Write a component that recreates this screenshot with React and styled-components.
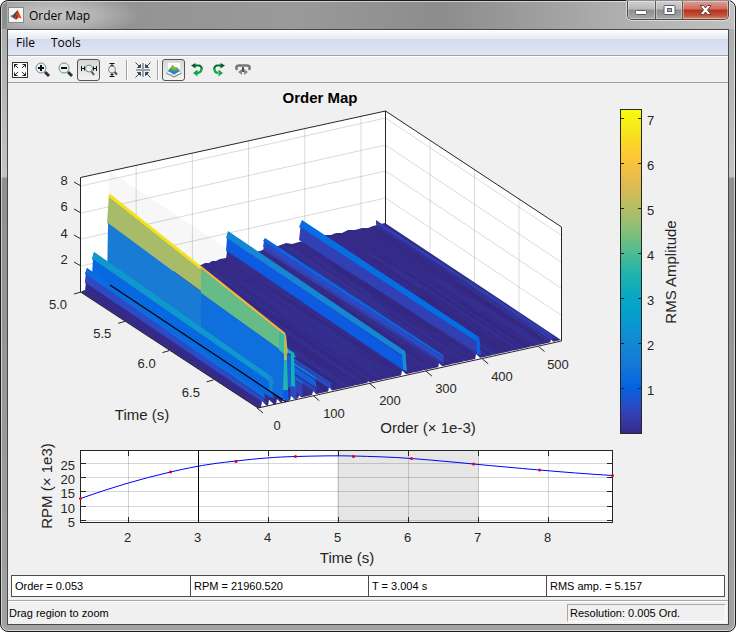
import React, { useState } from 'react';
import styled, { createGlobalStyle } from 'styled-components';

const GlobalStyle = createGlobalStyle`
  * {
    box-sizing: border-box;
  }

  body {
    margin: 0;
    background: #fff;
    color: #000;
    font-family: 'Liberation Sans', Arial, sans-serif;
    font-size: 11px;
  }
`;

const Window = styled.div`
  display: flex;
  flex-direction: column;
  min-height: 100vh;
  padding: 0 6px 6px;
  border: 1px solid #1c1c1c;
  border-radius: 8px;
  box-shadow: inset 0 0 0 1px rgba(255, 255, 255, .55);
  background:
    linear-gradient(90deg, #8e8e8e, #9a9a9a 40%, #8c8c8c 60%, #b4b4b4 88%, #c0c0c0) top / 100% 28px no-repeat,
    linear-gradient(#a8a8a8, #c4c4c4 176px, #8f8f8f 177px, #a2a2a2);
`;

const TitleBar = styled.header`
  display: flex;
  align-items: center;
  gap: 5px;
  height: 28px;
  padding-left: 1px;
  background: radial-gradient(ellipse 90px 24px at 44px 14px, rgba(255, 255, 255, .5), rgba(255, 255, 255, .3) 50%, rgba(255, 255, 255, 0));

  & > svg {
    flex: none;
  }
`;

const Title = styled.h1`
  flex: 1;
  margin: 0;
  font-family: 'Open Sans', sans-serif;
  font-size: 12px;
  font-weight: 400;
`;

const CaptionButtons = styled.div`
  display: flex;
  align-self: flex-start;
  height: 19px;
  border: 1px solid #4a4a4a;
  border-top: 0;
  border-radius: 0 0 5px 5px;
  box-shadow: 0 0 0 1px rgba(255, 255, 255, .5);
  overflow: hidden;
`;

const CaptionButton = styled.button`
  display: grid;
  place-items: center;
  width: ${props => props.$close ? '46px' : '27px'};
  padding: 0;
  border: 0;
  border-left: ${props => props.$first ? '0' : '1px solid #5a5a5a'};
  background: ${props => props.$close
    ? 'linear-gradient(#dba197, #cf6a59 45%, #b3311c 50%, #c4503a 80%, #d98a70)'
    : 'linear-gradient(#d0d0d0, #b9b9b9 45%, #8d8d8d 50%, #a9a9a9)'};
  box-shadow: inset 0 0 0 1px rgba(255, 255, 255, .35);
`;

const Client = styled.main`
  display: flex;
  flex: 1;
  flex-direction: column;
  border: 1px solid #484848;
  background: #f0f0f0;
`;

const MenuBar = styled.nav`
  display: flex;
  height: 26px;
  border-bottom: 1px solid #a0a0a0;
  background: linear-gradient(#fff, #e5eaf5 34%, #d4dbed 36%, #e1e6f6);
`;

const MenuItem = styled.button`
  padding: 0 8px;
  border: 0;
  background: none;
  font-family: 'Open Sans', sans-serif;
  font-size: 12px;
  color: #000;
`;

const Toolbar = styled.div`
  display: flex;
  align-items: center;
  height: 27px;
  border-top: 1px solid #fff;
  border-bottom: 1px solid #a0a0a0;
`;

const ToolButton = styled.button`
  display: grid;
  place-items: center;
  width: 23px;
  height: 22px;
  padding: 0;
  border: 1px solid ${props => props.$pressed ? '#555' : 'transparent'};
  border-radius: 3px;
  background: ${props => props.$pressed ? 'linear-gradient(#d6d6d6, #f2f2f2)' : 'none'};
`;

const Separator = styled.span`
  width: 2px;
  height: 20px;
  margin: 0 3px;
  border-left: 1px solid #a0a0a0;
  border-right: 1px solid #fff;
`;

const Figure = styled.section`
  flex: 1;
`;

const PlotRow = styled.div`
  display: grid;
  grid-template-columns: ${props => props.$columns || '1fr'};
`;

const Chart = styled.svg`
  display: block;
  width: 100%;
  height: auto;

  text {
    fill: #262626;
    font-size: 13px;
  }

  text.label {
    font-size: 15px;
  }

  text.title {
    font-size: 15px;
    font-weight: 700;
    fill: #000;
  }
`;

const Readouts = styled.div`
  display: grid;
  grid-template-columns: repeat(4, 1fr);
  margin: 3px;
  border: 1px solid #4c4c4c;
  background: #fff;
`;

const Readout = styled.output`
  height: 20px;
  padding-left: 3px;
  line-height: 21px;

  & + & {
    border-left: 1px solid #4c4c4c;
  }
`;

const StatusBar = styled.footer`
  display: flex;
  justify-content: space-between;
  align-items: center;
  height: 24px;
  padding: 0 2px 0 1px;
  border-top: 1px solid #a8a8a8;
  box-shadow: inset 0 1px #fff;
`;

const StatusPanel = styled.span`
  width: 159px;
  height: 18px;
  padding-left: 2px;
  border: 1px solid;
  border-color: #a8a8a8 #fff #fff #a8a8a8;
  line-height: 16px;
`;

const MatlabIcon = () => (
  <svg width="16" height="16" viewBox="0 0 16 16" aria-hidden="true">
    <rect x=".5" y=".5" width="15" height="15" fill="#f4f4f4" stroke="#8a8a8a" />
    <path d="M2 9 L5.500 7.500 L7 9 L5 11 Z" fill="#3f7fc0" />
    <path d="M5.500 7.500 L9.500 3 L8.500 8.500 L6.500 11.500 L5 11 Z" fill="#5a3a3a" />
    <path d="M9.500 2.500 Q11.500 7 14 12 Q11.500 10 9.500 11.500 Q8 13.500 6.500 11.500 Q8.500 7 9.500 2.500 Z" fill="#d9531e" />
    <path d="M9.500 3 Q10 7 9 12 Q8 13 7 11.800 Q9 8 9.500 3 Z" fill="#8f2a1a" />
  </svg>
);

const Magnifier = ({ sign }) => (
  <svg width="16" height="16" viewBox="0 0 16 16">
    <path d="M10 10 L14 14" stroke="#333" strokeWidth="3" />
    <circle cx="6" cy="6" r="5" fill="#e6f3f6" stroke="#7b8a92" />
    <path d={sign === '+' ? 'M3 6 H9 M6 3 V9' : 'M3 6 H9'} stroke="#111" strokeWidth="2" />
  </svg>
);

const icons = {
  fit: (
    <svg width="16" height="16" viewBox="0 0 16 16">
      <rect x=".5" y=".5" width="15" height="15" fill="#fafafa" stroke="#333" />
      <path d="M2.500 5.500 V2.500 H5.500 M2.500 2.500 L6 6 M10.500 2.500 H13.500 V5.500 M13.500 2.500 L10 6 M2.500 10.500 V13.500 H5.500 M2.500 13.500 L6 10 M10.500 13.500 H13.500 V10.500 M13.500 13.500 L10 10" fill="none" stroke="#222" />
    </svg>
  ),
  zoomIn: <Magnifier sign="+" />,
  zoomOut: <Magnifier sign="-" />,
  zoomX: (
    <svg width="16" height="16" viewBox="0 0 16 16">
      <path d="M.5 4 V9 M3.500 4.500 V8.500 M0 6.500 H4 M12.500 4.500 V8.500 M15.500 4 V9 M12 6.500 H16" stroke="#111" />
      <path d="M10 9 L13 13" stroke="#555" strokeWidth="2" />
      <circle cx="8" cy="6.500" r="3.500" fill="#e3eef3" stroke="#7b8489" />
    </svg>
  ),
  zoomY: (
    <svg width="16" height="16" viewBox="0 0 16 16">
      <path d="M5.500 1.500 H10.500 M8 1 V5 M5.500 14.500 H10.500 M8 11 V15 M6.500 3.500 H9.500 M6.500 12.500 H9.500" stroke="#111" />
      <path d="M10 9.500 L13 12.500" stroke="#444" strokeWidth="2" />
      <circle cx="8" cy="7.500" r="3.500" fill="#e3eef3" stroke="#7b8489" />
    </svg>
  ),
  cursor: (
    <svg width="16" height="16" viewBox="0 0 16 16">
      <path d="M8 1 V15 M1 8 H15" stroke="#a2a2a2" strokeWidth="2" />
      <g fill="#2d4a70" stroke="#2d4a70">
        <path d="M5.500 2.500 V5.500 H2.500 Z M.5 .5 L4 4" />
        <path d="M10.500 2.500 V5.500 H13.500 Z M15.500 .5 L12 4" />
        <path d="M5.500 13.500 V10.500 H2.500 Z M.5 15.500 L4 12" />
        <path d="M10.500 13.500 V10.500 H13.500 Z M15.500 15.500 L12 12" />
      </g>
    </svg>
  ),
  surface: (
    <svg width="18" height="18" viewBox="0 0 18 18">
      <rect x="2.500" y="1.500" width="13" height="12" fill="#fff" stroke="#dedede" />
      <path d="M1.500 12 L9 16 L16.500 12" fill="none" stroke="#777" />
      <path d="M2.500 10 L6 7.500 L15.500 10 L9 13.500 Z" fill="#2a7fd0" />
      <path d="M3.500 9 Q6 6.500 7.500 4 Q10 7 12 6.500 Q14 8 15 9 L9 11 Z" fill="#35a07c" />
      <path d="M6 7.500 Q8 2.500 9.500 6.500 Q12 5 13 8 L9 9 Z" fill="#9cae3a" />
      <path d="M7 5.500 Q8 3.500 9 6 Z" fill="#e8982c" />
    </svg>
  ),
  rotateLeft: (
    <svg width="16" height="16" viewBox="0 0 16 16">
      <path d="M5 3.500 H10 Q12.500 4 13 7" fill="none" stroke="#0b6b38" strokeWidth="2" />
      <path d="M2 3.500 L6.500 1 V6.500 Z" fill="#0b5e32" />
      <path d="M12.500 6 Q13 10.500 8 11" fill="none" stroke="#12a552" strokeWidth="2.500" />
      <path d="M4 11 L8.500 7.500 V14.500 Z" fill="#12a552" />
    </svg>
  ),
  rotateRight: (
    <svg width="16" height="16" viewBox="0 0 16 16">
      <path d="M9 3.500 H5 Q2.500 4 2 7" fill="none" stroke="#0b6b38" strokeWidth="2" />
      <path d="M13 3.500 L8.500 1 V6.500 Z" fill="#0b5e32" />
      <path d="M2.500 6 Q2 10.500 6 11" fill="none" stroke="#12a552" strokeWidth="2.500" />
      <path d="M11 11 L6.500 7.500 V14.500 Z" fill="#12a552" />
    </svg>
  ),
  reset: (
    <svg width="16" height="16" viewBox="0 0 16 16">
      <path d="M2 8 Q0 3.500 4 3.500 H12 Q16 3.500 14 8" fill="none" stroke="#777" strokeWidth="2.500" />
      <path d="M3 10 L7 7 V13 Z M13 10 L9 7 V13 Z" fill="#8a8a8a" />
      <path d="M8 5 V10" stroke="#555" strokeWidth="2" />
    </svg>
  ),
};

const tools = [
  { id: 'fit', label: 'Zoom to full' },
  { id: 'zoomIn', label: 'Zoom in' },
  { id: 'zoomOut', label: 'Zoom out' },
  { id: 'zoomX', label: 'Zoom X', toggle: true },
  { id: 'zoomY', label: 'Zoom Y' },
  null,
  { id: 'cursor', label: 'Crosshair cursor' },
  null,
  { id: 'surface', label: '3D view', toggle: true },
  { id: 'rotateLeft', label: 'Rotate left' },
  { id: 'rotateRight', label: 'Rotate right' },
  { id: 'reset', label: 'Reset rotation' },
];

const BASE = '#352a87';

// Back edge of the surface, then round the floor
const floor = `81,292 201,265 205,263 209,263 212,261 216,261 220,259 226,258 240,256 260,251
  270,247 278,246 286,243 292,244 299,242 312,239 326,235 331,235 336,233 342,233 348,230
  355,230 362,228 368,228 373,226 385,223 561,340 258,407`;

// Ridges from the far side to the near side: crest endpoints and stacked bands [fill, back, front]
const ridges = [
  { from: [376, 220], to: [554, 337], foot: [0, 1], bands: [['#3040ae', 4, 2], ['#342f93', 3, 2]] },
  { from: [302, 220], to: [479, 337], foot: [-3, 1], bands: [['#056ee2', 7, 7], ['#3140b5', 13, 11]] },
  { from: [265, 238], to: [443, 355], foot: [-2, 1], bands: [['#0a67df', 3, 3], ['#2b4bc6', 6, 5], ['#3440a8', 3, 2]] },
  { from: [228, 231], to: [405, 351], foot: [-2, 1], bands: [['#1486d4', 7, 7], ['#0d5be0', 13, 14], ['#352c8c', 8, 1]] },
  { from: [154, 266], to: [331, 383], foot: [0, 1], bands: [['#0f66dc', 2, 2], ['#2c49c2', 6, 5]] },
  { from: [138, 260], to: [315, 377], foot: [0, 2], bands: [['#118ad3', 3, 3], ['#0f63df', 8, 8], ['#2d44bb', 6, 5]] },
  { from: [125, 265], to: [302, 381], foot: [0, 1], bands: [['#0f66dc', 4, 4], ['#3042b8', 12, 12]] },
  { from: [117, 236], to: [294, 353], foot: [0, 2], bands: [['#12b1b6', 5, 5], ['#1560d8', 34, 34]] },
  { from: [109, 194], to: [286, 335], foot: [-2, 2], bands: [['#a8bb68', 29, 19], ['#1a7bd4', 64, 46]] },
  { from: [94, 252], to: [272, 377], foot: [-2, 2], bands: [['#0f98cd', 7, 7], ['#0768df', 27, 20]] },
  { from: [87, 268], to: [264, 393], foot: [-2, 1], bands: [['#0d6cdd', 6, 6], ['#2d49c4', 9, 5], [BASE, 10, 2]] },
];

// White gaps between the ridges along the front edge: [x, height]
const gaps = [[261, 6], [268, 6], [276, 5], [282, 4], [290, 5], [298, 4], [312, 5], [328, 5], [354, 2],
  [367, 3], [373, 2], [383, 2], [401, 6], [412, 2], [422, 2], [438, 5], [452, 2], [463, 2], [475, 6],
  [492, 2], [511, 2], [530, 2], [550, 4]];

const frontEdge = x => 408 - (x - 258) * 67 / 303;

const streaks = Array.from({ length: 90 }, (_, i) => {
  const noise = n => Math.abs(Math.sin((i + 1) * n) * 1000) % 1;
  const x = 90 + i * 3.3;
  const y = 289 - (x - 81) * 67 / 304;
  const start = noise(12.9) * .7;
  const end = Math.min(1, start + .25 + noise(78.2) * .6);
  return {
    d: `M${x + 176 * start} ${y + 117 * start} L${x + 176 * end} ${y + 117 * end}`,
    stroke: noise(4.1) > .5 ? '#3440a6' : '#2f2478',
    opacity: .15 + noise(39.4) * .25,
  };
});

const Ridge = ({ from, to, foot, bands }) => {
  let back = 0;
  let front = 0;
  return bands.map(([fill, b, f], i) => {
    const points = [
      [from[0] + (i ? foot[0] / 2 : 0), from[1] + back],
      [to[0], to[1] + front],
      [to[0] + foot[1], to[1] + front + f],
      [from[0] + foot[0], from[1] + back + b],
    ];
    back += b;
    front += f;
    return <polygon key={i} points={points.join(' ')} fill={fill} />;
  });
};

const SurfacePlot = () => (
  <Chart viewBox="8 83 600 357" role="img" aria-label="Order map surface">
    <text className="title" x="320" y="103" textAnchor="middle">Order Map</text>
    <polygon points="81,177 385,111 561,227 561,341 258,408 81,292" fill="#fff" />
    <g stroke="#262626" strokeOpacity=".17" fill="none">
      {[186, 213, 239, 266].map(y => <path key={y} d={`M81 ${y} L385.500 ${y - 68} L561 ${y + 49}`} />)}
      {[1, 2, 3, 4, 5].map(k => <path key={k} d={`M${80 + 56.2 * k} ${177 - 12.3 * k} v115`} />)}
      {[1, 2, 3].map(k => <path key={k} d={`M${385.5 + 44.5 * k} ${111 + 29 * k} v114`} />)}
    </g>
    <g stroke="#262626" fill="none">
      <path d="M80.500 292 V177.500 L385.500 111 L561.500 227 V341" />
      <path d="M385.500 111 V224" />
    </g>
    <polygon points="109,171 226,248 226,262 109,290" fill="#000" opacity=".03" />

    <clipPath id="floor"><polygon points={floor} /></clipPath>
    <polygon points={floor} fill={BASE} />
    <g clipPath="url(#floor)" fill="none" strokeWidth="2">
      {streaks.map(s => <path key={s.d} {...s} />)}
      <path d="M467 282 L552 338" stroke="#2f49bb" strokeWidth="4" />
    </g>
    {ridges.map(r => <Ridge key={r.to[0]} {...r} />)}

    {/* cells at the end of the dominant order */}
    <polygon points="201,267 286,335 286,354 201,293" fill="#65bc86" />
    <polygon points="201,293 286,354 286,401 201,347" fill="#0f6fdc" />
    <path d="M109 195 L201 268" stroke="#f4e21b" strokeWidth="3" />
    <path d="M201 267 L285 334" stroke="#fcb43c" strokeWidth="2" />
    <polygon points="279,331 284,335 284,354 279,350" fill="#3fb9a0" />
    <polygon points="284,334 286,336 287,360 284,360" fill="#b5b95e" />
    <polygon points="284,360 287,360 288,390 283,390" fill="#1fb5b0" />
    <polygon points="283,390 288,390 289,401 282,402" fill="#0d5be0" />
    <polygon points="291,351 294,353 295,387 291,386" fill="#12b1b6" />
    <polygon points="291,386 295,387 297,399 290,400" fill="#2b4bc6" />
    <Ridge {...ridges[9]} />
    <polygon points="81,292 84,290 272,398 289,401 258,408" fill={BASE} />
    <Ridge {...ridges[10]} />
    <polygon points="269,375 272,377 273,392 269,390" fill="#1486d4" />
    <polygon points="402,350 405,351 407,371 403,369" fill="#1490d0" />
    <polygon points="476,336 479,337 481,355 477,354" fill="#0b62df" />
    {gaps.map(([x, h]) => (
      <polygon
        key={x}
        points={`${x},${frontEdge(x)} ${x + 1},${frontEdge(x) - h} ${x + h},${frontEdge(x + h)}`}
        fill="#fff"
      />
    ))}
    <path d="M110 285 L286 402" stroke="#000" strokeWidth="1.200" />

    <g stroke="#262626" fill="none">
      <path d="M80.500 292 L258 408 L561.500 341" />
      {[186, 213, 239, 266].map(y => <path key={y} d={`M74 ${y - 4} l7 4`} />)}
      {[0, 1, 2, 3].map(k => <path key={k} d={`M${74 + 44.2 * k} ${294 + 29.3 * k} l7 -2`} />)}
      {[0, 1, 2, 3, 4, 5].map(k => <path key={k} d={`M${257 + 56.3 * k} ${408 - 12.3 * k} l6 5`} />)}
    </g>
    <g textAnchor="middle">
      {[[8, 185], [6, 211], [4, 238], [2, 264]].map(([z, y]) => <text key={z} x="64" y={y}>{z}</text>)}
      {['5.0', '5.5', '6.0', '6.5'].map((t, k) => <text key={t} x={58 + 44.3 * k} y={309 + 29.3 * k}>{t}</text>)}
      {[0, 100, 200, 300, 400, 500].map((o, k) => <text key={o} x={k ? 278 + 56 * k : 277} y={430 - 12.3 * k}>{o}</text>)}
      <text className="label" x="142" y="420">Time (s)</text>
      <text className="label" x="428" y="433">Order (× 1e-3)</text>
    </g>
  </Chart>
);

const parula = ['#352a87', '#3145bc', '#0363e1', '#1479d7', '#1389d3', '#069ccf', '#07a9c2', '#25b4a9',
  '#59bd8c', '#92bf73', '#c0bc60', '#e8bb4b', '#fec735', '#f5e41d', '#f9fb0e'];

const ColorBar = () => (
  <Chart viewBox="608 83 120 357" role="img" aria-label="RMS amplitude scale">
    <linearGradient id="parula" x1="0" y1="1" x2="0" y2="0">
      {parula.map((c, i) => <stop key={c} offset={i / (parula.length - 1)} stopColor={c} />)}
    </linearGradient>
    <rect x="620.500" y="109.500" width="21" height="324" fill="url(#parula)" stroke="#262626" />
    {[1, 2, 3, 4, 5, 6, 7].map(v => {
      const y = Math.round(433 - v * 45) + .5;
      return (
        <g key={v}>
          <path d={`M621 ${y} h3 M638 ${y} h3`} stroke="#262626" />
          <text x="647" y={y + 6}>{v}</text>
        </g>
      );
    })}
    <text className="label" transform="translate(676 272) rotate(-90)" textAnchor="middle">RMS Amplitude</text>
  </Chart>
);

const rpmPoints = [[80.5, 498.5], [170.5, 472], [236, 461.5], [295.5, 456.5], [353.5, 456.5],
  [411.5, 458.5], [473.5, 464], [539.5, 470], [612.5, 475.5]];

const RpmPlot = () => (
  <Chart viewBox="8 440 720 132" role="img" aria-label="RPM over time">
    <rect x="80.500" y="450.500" width="532" height="72" fill="#fff" />
    <rect x="337" y="451" width="142" height="71" fill="#e6e6e6" />
    {[2, 3, 4, 5, 6, 7, 8].map(t => {
      const x = 70 * t - 11.5;
      return (
        <g key={t}>
          <path d={`M${x} 451 V522`} stroke="#000" strokeOpacity=".16" />
          <path d={`M${x} 451 v5 M${x} 522 v-5`} stroke="#262626" />
          <text x={x - 1} y="542" textAnchor="middle">{t}</text>
        </g>
      );
    })}
    {[[25, 463.5], [20, 477.5], [15, 491.5], [10, 506.5], [5, 520.5]].map(([rpm, y]) => (
      <g key={rpm}>
        <path d={`M81 ${y} H612`} stroke="#000" strokeOpacity=".16" />
        <path d={`M81 ${y} h5 M612 ${y} h-5`} stroke="#262626" />
        <text x="75" y={y + 6} textAnchor="end">{rpm}</text>
      </g>
    ))}
    <rect x="80.500" y="450.500" width="532" height="72" fill="none" stroke="#262626" />
    <path d="M198.500 451 V522" stroke="#000" />
    <path
      d="M80.500 498.500 C110 488 140 479 170.500 472 S214 463.500 236 461 S275 457 295.500 456.500 S335 455.500 353.500 456 S392 457 411.500 458.500 S453 462 473.500 464 S517 468 539.500 470 S588 474 612.500 475.500"
      fill="none"
      stroke="#00f"
    />
    {rpmPoints.map(([x, y]) => <circle key={x} cx={x} cy={y} r="1.500" fill="#e00020" />)}
    <text className="label" x="347" y="563" textAnchor="middle">Time (s)</text>
    <text className="label" transform="translate(52 486) rotate(-90)" textAnchor="middle">RPM (× 1e3)</text>
  </Chart>
);

const App = () => {
  const [pressed, setPressed] = useState({ zoomX: true, surface: true });

  const toggle = tool => {
    if (tool.toggle) {
      setPressed({ ...pressed, [tool.id]: !pressed[tool.id] });
    }
  };

  return (
    <React.Fragment>
      <GlobalStyle />
      <Window>
        <TitleBar>
          <MatlabIcon />
          <Title>Order Map</Title>
          <CaptionButtons>
            <CaptionButton $first aria-label="Minimize">
              <svg width="13" height="13" viewBox="0 0 13 13">
                <rect x=".5" y="6.500" width="11" height="4" rx="1" fill="#fff" stroke="#555c6b" />
              </svg>
            </CaptionButton>
            <CaptionButton aria-label="Maximize">
              <svg width="13" height="11" viewBox="0 0 13 11">
                <rect x="1" y=".5" width="11" height="9" rx="1" fill="#fff" stroke="#555c6b" />
                <rect x="4.500" y="3.500" width="4" height="3" fill="#aaa" stroke="#555c6b" />
              </svg>
            </CaptionButton>
            <CaptionButton $close aria-label="Close">
              <svg width="13" height="11" viewBox="0 0 13 11">
                <path d="M1 .5 H4.500 L6.500 3 L8.500 .5 H12 L8.500 5 L12 9.500 H8.500 L6.500 7 L4.500 9.500 H1 L4.500 5 Z" fill="#fff" stroke="#56484a" />
              </svg>
            </CaptionButton>
          </CaptionButtons>
        </TitleBar>
        <Client>
          <MenuBar>
            <MenuItem>File</MenuItem>
            <MenuItem>Tools</MenuItem>
          </MenuBar>
          <Toolbar>
            {tools.map((tool, i) => tool ? (
              <ToolButton
                key={tool.id}
                aria-label={tool.label}
                $pressed={pressed[tool.id]}
                onClick={() => toggle(tool)}
              >
                {icons[tool.id]}
              </ToolButton>
            ) : <Separator key={i} />)}
          </Toolbar>
          <Figure>
            <PlotRow $columns="5fr 1fr">
              <SurfacePlot />
              <ColorBar />
            </PlotRow>
            <PlotRow>
              <RpmPlot />
            </PlotRow>
          </Figure>
          <Readouts>
            <Readout>Order = 0.053</Readout>
            <Readout>RPM = 21960.520</Readout>
            <Readout>T = 3.004 s</Readout>
            <Readout>RMS amp. = 5.157</Readout>
          </Readouts>
          <StatusBar>
            <span>Drag region to zoom</span>
            <StatusPanel>Resolution: 0.005 Ord.</StatusPanel>
          </StatusBar>
        </Client>
      </Window>
    </React.Fragment>
  );
};

export default App;
